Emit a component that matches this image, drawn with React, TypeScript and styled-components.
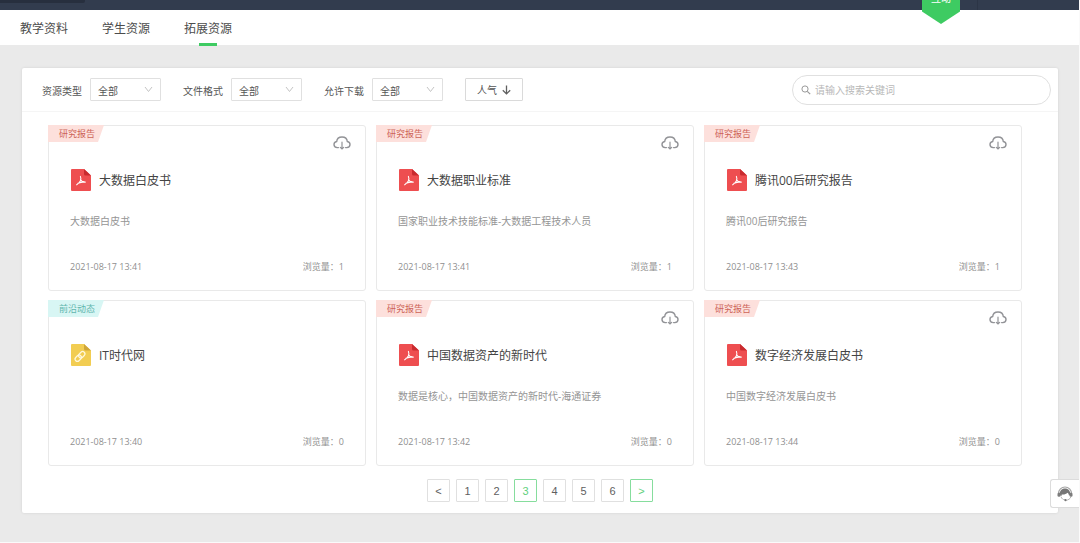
import React from "react";
import styled, { createGlobalStyle } from "styled-components";

const GlobalStyle = createGlobalStyle`
  *, *::before, *::after { box-sizing: border-box; }
  body {
    margin: 0;
    background: #fff;
    color: #555;
    font-family: "Open Sans", "Noto Sans CJK SC", sans-serif;
    font-size: 10px;
    line-height: 16px;
  }
  button, input, select { font: inherit; color: inherit; margin: 0; }
  h2, p { margin: 0; font-weight: 400; }
`;

const Page = styled.div`
  display: flex;
  flex-direction: column;
  min-height: 100vh;
  background: #eaeaea;
  border-right: 1px solid #fafafa;
  border-bottom: 1px solid #fafafa;
`;

const TopBar = styled.header`
  position: relative;
  display: flex;
  justify-content: space-between;
  height: 10px;
  background: #323c4e;
`;

const BrandEdge = styled.div`
  width: 85px;
  height: 3px;
  background: #272f3e;
  border-bottom-right-radius: 2px;
`;

const AccountArea = styled.div`
  width: 102px;
  border-left: 1px solid #2c3546;
`;

const Ribbon = styled.a`
  position: absolute;
  right: 119px;
  bottom: -14px;
  z-index: 1;
  display: flex;
  align-items: center;
  justify-content: center;
  width: 38px;
  height: 52px;
  background: #3ecb62;
  color: #fff;
  text-decoration: none;
  clip-path: polygon(0 0, 100% 0, 100% 76%, 50% 100%, 0 76%);
`;

const Nav = styled.nav`
  display: flex;
  gap: 34px;
  height: 35px;
  padding: 0 20px;
  background: #fff;
`;

const NavLink = styled.a<{ $active?: boolean }>`
  position: relative;
  height: 35px;
  color: #4c4c4c;
  font-size: 12px;
  line-height: 38px;
  text-decoration: none;

  &::after {
    content: "";
    display: ${(p) => (p.$active ? "block" : "none")};
    position: absolute;
    left: 50%;
    bottom: -1px;
    width: 18px;
    height: 3px;
    margin-left: -9px;
    background: #3ecb62;
  }
`;

const Panel = styled.main`
  margin: 23px 21px 29px 22px;
  background: #fff;
  border-radius: 2px;
  box-shadow: 0 0 3px rgba(0, 0, 0, 0.1);
`;

const Toolbar = styled.form`
  display: flex;
  align-items: center;
  gap: 22px;
  height: 44px;
  padding: 0 7px 0 20px;
  border-bottom: 1px solid #f5f5f5;
`;

const Filter = styled.label`
  display: flex;
  align-items: center;
  gap: 8px;
`;

const FilterName = styled.span`
  padding-top: 2px;
`;

const SelectBox = styled.span`
  position: relative;
  display: block;

  svg {
    position: absolute;
    top: 8px;
    right: 8px;
    pointer-events: none;
  }
`;

const Select = styled.select`
  display: block;
  width: 71px;
  height: 23px;
  padding: 2px 7px 0;
  appearance: none;
  background: #fff;
  border: 1px solid #e0e0e0;
  border-radius: 1px;
`;

const SortButton = styled.button`
  display: flex;
  align-items: center;
  justify-content: center;
  gap: 5px;
  width: 58px;
  height: 23px;
  padding: 0;
  background: #fff;
  border: 1px solid #dadada;
  border-radius: 1px;
`;

const Search = styled.label`
  display: flex;
  align-items: center;
  gap: 4px;
  width: 259px;
  height: 30px;
  margin-left: auto;
  padding: 0 8px;
  border: 1px solid #e0e0e0;
  border-radius: 15px;
`;

const SearchInput = styled.input`
  flex: 1;
  min-width: 0;
  padding: 0;
  border: 0;
  outline: 0;
  background: none;

  &::placeholder { color: #b8b8b8; opacity: 1; }
`;

const Grid = styled.section`
  display: grid;
  grid-template-columns: repeat(3, 1fr);
  gap: 9px 10px;
  padding: 13px 36px 0 26px;
`;

const Card = styled.article`
  position: relative;
  padding: 43px 21px 16px;
  border: 1px solid #e9e9e9;
  border-radius: 3px;
`;

const Tag = styled.span<{ $tone: "red" | "teal" }>`
  position: absolute;
  top: -1px;
  left: -1px;
  width: 56px;
  height: 17px;
  padding-left: 11px;
  background: ${(p) => (p.$tone === "red" ? "#fde0dc" : "#d8f6f4")};
  color: ${(p) => (p.$tone === "red" ? "#cd6458" : "#5fb5ad")};
  font-size: 9px;
  line-height: 17px;
  clip-path: polygon(0 0, 100% 0, 50px 100%, 0 100%);
`;

const Download = styled.button`
  position: absolute;
  top: 10px;
  right: 14px;
  display: block;
  padding: 0;
  border: 0;
  background: none;

  svg { display: block; }
`;

const CardHead = styled.div`
  display: flex;
  align-items: center;
  gap: 8px;
  height: 22px;
`;

const CardTitle = styled.h2`
  padding-top: 2px;
  color: #444;
  font-size: 12px;
  line-height: 22px;
`;

const Description = styled.p`
  min-height: 16px;
  margin-top: 22px;
  color: #959595;
`;

const Meta = styled.div`
  display: flex;
  justify-content: space-between;
  margin-top: 31px;
  color: #8f8f8f;
  font-size: 9px;
  line-height: 14px;
`;

const Pager = styled.nav`
  display: flex;
  justify-content: center;
  gap: 6px;
  padding: 13px 0 11px;
`;

const PageButton = styled.button<{ $active?: boolean }>`
  display: flex;
  align-items: center;
  justify-content: center;
  width: 23px;
  height: 23px;
  padding: 0;
  background: #fff;
  border: 1px solid ${(p) => (p.$active ? "#86dd9d" : "#e0e0e0")};
  border-radius: 1px;
  color: ${(p) => (p.$active ? "#5fd07c" : "#606060")};
  font-family: "Liberation Sans", Arial, sans-serif;
  font-size: 11px;
`;

const Support = styled.button`
  position: fixed;
  right: 1px;
  bottom: 35px;
  display: flex;
  align-items: center;
  justify-content: center;
  width: 29px;
  height: 29px;
  padding: 0;
  background: #fff;
  border: 1px solid #dcdcdc;
  border-right: 0;
  border-radius: 3px 0 0 3px;
`;

const ChevronDown = () => (
  <svg width="9" height="7" viewBox="0 0 9 7" fill="none" stroke="#c4c4c4" aria-hidden="true">
    <path d="M1 1l3.5 4.5L8 1" />
  </svg>
);

const ArrowDown = () => (
  <svg width="9" height="10" viewBox="0 0 9 10" fill="none" stroke="#606060" strokeWidth="1.3" aria-hidden="true">
    <path d="M4.5 0.5v8.3M0.8 5.2l3.7 3.7 3.7-3.7" />
  </svg>
);

const SearchIcon = () => (
  <svg width="10" height="10" viewBox="0 0 10 10" fill="none" stroke="#999" aria-hidden="true">
    <circle cx="4" cy="4" r="3.1" />
    <path d="M6.3 6.3L9.2 9.2" strokeWidth="1.2" />
  </svg>
);

const CloudIcon = () => (
  <svg width="18" height="14" viewBox="0 0 18 14" fill="none" stroke="#929397" strokeWidth="1.4" strokeLinecap="round" aria-hidden="true">
    <path d="M5.4 11.6H4.300C2.300 11.500 1 10.200 1 8.500 1 6.900 2.200 5.800 3.700 5.500 3.900 2.900 6.100 1 9 1s5.100 1.900 5.300 4.500C15.800 5.800 17 6.900 17 8.500c0 1.700-1.300 3-3.300 3.100h-1.100" />
    <path d="M9 6.200v6.600M7.300 11.400L9 13l1.700-1.600" strokeWidth="1.2" />
  </svg>
);

const PdfIcon = () => (
  <svg width="21" height="22" viewBox="0 0 21 22" aria-hidden="true">
    <path d="M2 0h12l7 6.500V21a1 1 0 0 1-1 1H2a1 1 0 0 1-1-1V1a1 1 0 0 1 1-1z" fill="#ee4e50" />
    <path d="M14 0l7 6.500h-5.500A1.500 1.500 0 0 1 14 5z" fill="#c92b2f" />
    <path
      d="M10.400 7.400c.7 1.700.7 3.200-.1 4.700-.8 1.500-2 2.800-3.600 3.700M10.500 10.800c1 1.600 2.500 2.500 4.800 2.300M8 14.200c2-.8 3.700-1.200 6.200-1.300"
      fill="none"
      stroke="#fff"
      strokeWidth="1.1"
      strokeLinecap="round"
    />
  </svg>
);

const LinkIcon = () => (
  <svg width="21" height="22" viewBox="0 0 21 22" aria-hidden="true">
    <path d="M2 0h12l7 6.500V21a1 1 0 0 1-1 1H2a1 1 0 0 1-1-1V1a1 1 0 0 1 1-1z" fill="#f2cd52" />
    <path d="M14 0l7 6.500h-5.500A1.500 1.500 0 0 1 14 5z" fill="#cfa63a" />
    <g fill="none" stroke="#fff8dc" strokeWidth="1.2" transform="rotate(-45 10 12.500)">
      <rect x="4" y="10.200" width="7" height="4.600" rx="2.300" />
      <rect x="9" y="10.200" width="7" height="4.600" rx="2.300" />
    </g>
  </svg>
);

const HeadsetIcon = () => (
  <svg width="16" height="16" viewBox="0 0 16 16" fill="none" aria-hidden="true">
    <path d="M1.500 7.500a6.500 6.500 0 0 1 13 0" stroke="#a5a5a5" strokeWidth="1.200" />
    <path d="M2.700 8.800C2.400 5 4.600 2.400 8 2.400s5.600 2.600 5.300 6.400l-1.300.8c-.2-1.300-.6-2.200-1.400-2.800C9.200 8.300 6.800 8.800 4.800 8.500L4.300 10.300z" fill="#757575" />
    <rect x="0.500" y="6.800" width="3" height="4" rx="1.300" fill="#7c7c7c" />
    <rect x="12.500" y="6.800" width="3" height="4" rx="1.300" fill="#7c7c7c" />
    <path d="M4 10.800c.8 2 2.200 3 4 3M13.800 11c-.7 1.900-2.400 3-4.600 3.200" stroke="#b5b5b5" />
    <circle cx="8.500" cy="14.200" r="1.100" fill="#757575" />
  </svg>
);

type Resource = {
  tag: string;
  title: string;
  description: string;
  date: string;
  views: number;
  kind: "pdf" | "link";
};

const resources: Resource[] = [
  { tag: "研究报告", title: "大数据白皮书", description: "大数据白皮书", date: "2021-08-17 13:41", views: 1, kind: "pdf" },
  { tag: "研究报告", title: "大数据职业标准", description: "国家职业技术技能标准-大数据工程技术人员", date: "2021-08-17 13:41", views: 1, kind: "pdf" },
  { tag: "研究报告", title: "腾讯00后研究报告", description: "腾讯00后研究报告", date: "2021-08-17 13:43", views: 1, kind: "pdf" },
  { tag: "前沿动态", title: "IT时代网", description: "", date: "2021-08-17 13:40", views: 0, kind: "link" },
  { tag: "研究报告", title: "中国数据资产的新时代", description: "数据是核心，中国数据资产的新时代-海通证券", date: "2021-08-17 13:42", views: 0, kind: "pdf" },
  { tag: "研究报告", title: "数字经济发展白皮书", description: "中国数字经济发展白皮书", date: "2021-08-17 13:44", views: 0, kind: "pdf" },
];

const filters = ["资源类型", "文件格式", "允许下载"];
const pages = [1, 2, 3, 4, 5, 6];

const ResourceCard = ({ item }: { item: Resource }) => (
  <Card>
    <Tag $tone={item.kind === "pdf" ? "red" : "teal"}>{item.tag}</Tag>
    {item.kind === "pdf" && (
      <Download type="button" aria-label="下载">
        <CloudIcon />
      </Download>
    )}
    <CardHead>
      {item.kind === "pdf" ? <PdfIcon /> : <LinkIcon />}
      <CardTitle>{item.title}</CardTitle>
    </CardHead>
    <Description>{item.description}</Description>
    <Meta>
      <time>{item.date}</time>
      <span>浏览量：{item.views}</span>
    </Meta>
  </Card>
);

export default function App() {
  return (
    <Page>
      <GlobalStyle />
      <TopBar>
        <BrandEdge />
        <AccountArea />
        <Ribbon href="#interact">互动</Ribbon>
      </TopBar>
      <Nav>
        <NavLink href="#teaching">教学资料</NavLink>
        <NavLink href="#student">学生资源</NavLink>
        <NavLink href="#extended" $active aria-current="page">拓展资源</NavLink>
      </Nav>
      <Panel>
        <Toolbar onSubmit={(e) => e.preventDefault()}>
          {filters.map((name) => (
            <Filter key={name}>
              <FilterName>{name}</FilterName>
              <SelectBox>
                <Select>
                  <option>全部</option>
                </Select>
                <ChevronDown />
              </SelectBox>
            </Filter>
          ))}
          <SortButton type="button">
            人气
            <ArrowDown />
          </SortButton>
          <Search>
            <SearchIcon />
            <SearchInput type="text" placeholder="请输入搜索关键词" aria-label="搜索" />
          </Search>
        </Toolbar>
        <Grid>
          {resources.map((item) => (
            <ResourceCard key={item.title} item={item} />
          ))}
        </Grid>
        <Pager aria-label="分页">
          <PageButton type="button" aria-label="上一页">&lt;</PageButton>
          {pages.map((n) => (
            <PageButton key={n} type="button" $active={n === 3}>{n}</PageButton>
          ))}
          <PageButton type="button" $active aria-label="下一页">&gt;</PageButton>
        </Pager>
      </Panel>
      <Support type="button" aria-label="在线客服">
        <HeadsetIcon />
      </Support>
    </Page>
  );
}
